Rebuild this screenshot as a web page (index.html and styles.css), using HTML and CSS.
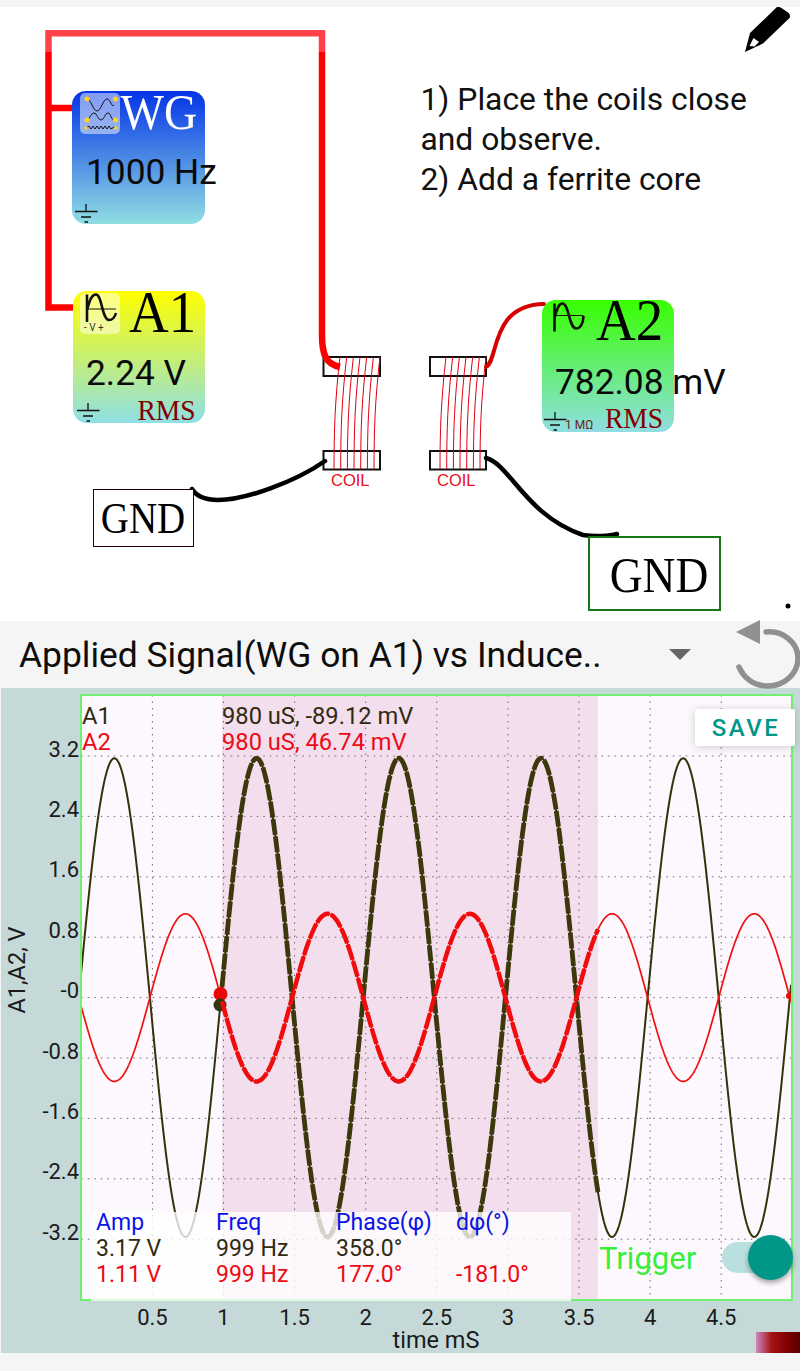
FILE: index.html
```html
<!DOCTYPE html>
<html lang="en">
<head>
<meta charset="utf-8">
<title>Induction experiment</title>
<link rel="stylesheet" href="styles.css">
<script src="chart.js" defer></script>
</head>
<body>
<div class="page">
  <div class="strip-top"></div>
  <section class="canvas">
    <svg class="wires" viewBox="0 7 800 614" width="800" height="614">
      <g class="bars">
        <rect x="323.5" y="357" width="56.500" height="19"/>
        <rect x="323.500" y="451" width="56.500" height="18.500"/>
        <rect x="430" y="357" width="56" height="19"/>
        <rect x="430" y="451" width="56" height="18.500"/>
      </g>
      <g fill="none" stroke-linejoin="miter">
        <path class="wire-red" d="M48.5 52V307.5H73M48.5 108H73M322 52V335C322 355 326 364 340 367"/>
        <path class="wire-pale" d="M48.5 52V33.3H322V52"/>
        <path class="wire-dark" d="M486 367C499 360 490 305 544 304"/>
        <path class="wire-black" d="M325 461C295 482 245 500 218 500C205 500 197 497 192 489"/>
        <path class="wire-black" d="M486 458C510 464 525 515 583 535C595 537 610 536 617 534"/>
      </g>
      <g class="turns">
        <path d="M340 357C335 400 334 430 334 469"/>
        <path d="M346.700 357C341.700 400 340.700 430 340.700 469"/>
        <path d="M353.400 357C348.400 400 347.400 430 347.400 469"/>
        <path d="M360 357C355 400 354 430 354 469"/>
        <path d="M366.700 357C361.700 400 360.700 430 360.700 469"/>
        <path d="M373.400 357C368.400 400 367.400 430 367.400 469"/>
        <path d="M380 357C375 400 374 430 374 469"/>
        <path d="M446 357C441 400 440 430 440 469"/>
        <path d="M452.700 357C447.700 400 446.700 430 446.700 469"/>
        <path d="M459.400 357C454.400 400 453.400 430 453.400 469"/>
        <path d="M466 357C461 400 460 430 460 469"/>
        <path d="M472.700 357C467.700 400 466.700 430 466.700 469"/>
        <path d="M479.400 357C474.400 400 473.400 430 473.400 469"/>
        <path d="M486 357C481 400 480 430 480 469"/>
      </g>
      <text class="coil-label" x="331" y="486">COIL</text>
      <text class="coil-label" x="437" y="486">COIL</text>
      <circle cx="788" cy="606" r="2.500"/>
    </svg>

    <svg class="pencil" viewBox="0 0 46 46" width="46" height="46">
      <path d="M31.700 1.300C33.500 0.500 35 1 36.500 2L43 6.500C45 8 45.500 10 44.500 12L18 37.500 0 46 5 27Z"/>
      <path class="pencil-tip" d="M8.500 32 14 36 9.500 40.500 4.500 40Z"/>
    </svg>

    <div class="module module-wg">
      <svg class="mod-icon mod-icon-plate" viewBox="0 0 40 41" width="40" height="41">
        <g class="ic-thin">
          <path d="M7 6C11 6 13 18 17 18S23 6 27 6 31 15 34 12"/>
          <path d="M7 27C9 27 11 20 14 20S18 27 21 27 25 20 28 20 31 27 34 27"/>
          <path d="M6 35 9 33 11 36 13 33 15 36 17 33 19 36 21 33 23 36 25 33 27 36 29 33 31 36 34 34"/>
        </g>
        <g class="ic-dot">
          <circle cx="7" cy="6" r="2.500"/><circle cx="35.500" cy="6" r="2.500"/>
          <circle cx="7" cy="27" r="2.500"/><circle cx="35.500" cy="27" r="2.500"/>
          <circle cx="6" cy="35" r="1.800"/><circle cx="36" cy="35" r="1.800"/>
        </g>
      </svg>
      <span class="mod-name mod-name-light">WG</span>
      <span class="mod-value">1000 Hz</span>
      <svg class="gnd" viewBox="0 0 23 20" width="23" height="20"><path d="M11 0V7M0 7.500H22.500M6 13H16M9.500 18H13"/></svg>
    </div>

    <div class="module module-a1">
      <svg class="mod-icon mod-icon-plate" viewBox="0 0 40 41" width="40" height="41">
        <path class="ic-thick" d="M7 1.500V29M7 17C10 6 12 1.500 16 1.500C22 1.500 22 27 29 27C32 27 35 24 36 20"/>
        <path class="ic-line" d="M7 16H36"/>
        <text class="ic-text" x="4" y="38">- V +</text>
      </svg>
      <span class="mod-name">A1</span>
      <span class="mod-value">2.24 V</span>
      <span class="mod-rms">RMS</span>
      <svg class="gnd" viewBox="0 0 23 20" width="23" height="20"><path d="M11 0V7M0 7.500H22.500M6 13H16M9.500 18H13"/></svg>
    </div>

    <div class="module module-a2">
      <svg class="mod-icon" viewBox="0 0 40 41" width="40" height="41">
        <path class="ic-thick" d="M4.500 1.500V29.500M4.500 16C7 6 9 1.500 12.500 1.500C19 1.500 19 26.500 26 26.500C30 26.500 33 22 33.500 14"/>
        <path class="ic-line" d="M4.500 13.500H33.500"/>
      </svg>
      <span class="mod-name">A2</span>
      <span class="mod-value">782.08 mV</span>
      <span class="mod-rms">RMS</span>
      <svg class="gnd" viewBox="0 0 23 20" width="23" height="20"><path d="M11 0V7M0 7.500H22.500M6 13H16M9.500 18H13"/></svg>
      <span class="mod-ohm">1 MΩ</span>
    </div>

    <div class="gnd-box gnd-box-a"><span class="gnd-word">GND</span></div>
    <div class="gnd-box gnd-box-b"><span class="gnd-word">GND</span></div>

    <p class="notes">1) Place the coils close<br>and observe.<br>2) Add a ferrite core</p>
  </section>

  <div class="picker">
    <span class="picker-text">Applied Signal(WG on A1) vs Induce..</span>
    <svg class="picker-caret" viewBox="0 0 22 11" width="22" height="11"><path d="M0 0H22L11 11Z"/></svg>
    <svg class="reset" viewBox="0 0 66 70" width="66" height="70">
      <path class="reset-head" d="M0 12 24 0V24Z"/>
      <path class="reset-arc" d="M30 12C47 10 62 23 62 38C62 54 48 66 32 66C18 66 8 58 3 47"/>
    </svg>
  </div>

  <section class="chart">
    <svg class="plot" viewBox="0 688 800 665" width="800" height="665">
      <rect class="plot-bg" x="81" y="695" width="710" height="605"/>
      <rect class="plot-band" x="222" y="695" width="376" height="605"/>
      <g id="grid" class="grid"></g>
      <path id="a1thin" class="a1-thin"/>
      <path id="a2thin" class="a2-thin"/>
      <circle class="mark-red" cx="220.500" cy="994" r="7"/>
      <circle class="mark-dark" cx="220" cy="1005" r="6.500"/>
      <path id="a1thick" class="a1-thick"/>
      <path id="a2thick" class="a2-thick"/>
      <circle class="mark-red" cx="789" cy="996" r="3"/>
      <rect class="plot-frame" x="81" y="695" width="711" height="605"/>
      <g id="yticks" class="tick tick-y"></g>
      <g id="xticks" class="tick tick-x"></g>
      <text class="axis-name" transform="translate(25 970) rotate(-90)">A1,A2, V</text>
    </svg>

    <span class="time-label">time mS</span>

    <div class="cursor">
      <div class="cursor-col">
        <span class="c-a1">A1</span>
        <span class="c-a2">A2</span>
      </div>
      <div class="cursor-col">
        <span class="c-a1">980 uS, -89.12 mV</span>
        <span class="c-a2">980 uS, 46.74 mV</span>
      </div>
    </div>

    <button class="save">SAVE</button>

    <div class="info">
      <span class="c-hd">Amp</span><span class="c-hd">Freq</span><span class="c-hd">Phase(φ)</span><span class="c-hd">dφ(°)</span>
      <span class="c-a1">3.17 V</span><span class="c-a1">999 Hz</span><span class="c-a1">358.0°</span><span></span>
      <span class="c-a2">1.11 V</span><span class="c-a2">999 Hz</span><span class="c-a2">177.0°</span><span class="c-a2">-181.0°</span>
    </div>

    <div class="trigger">
      <span class="trigger-label">Trigger</span>
      <span class="switch"><span class="switch-thumb"></span></span>
    </div>

    <div class="legend-bar"></div>
  </section>
  <div class="strip-bottom"></div>
</div>
</body>
</html>
```
FILE: styles.css
```css
* { box-sizing: border-box; }
html, body { margin: 0; padding: 0; background: #fff; }
body { font-family: Roboto, "Liberation Sans", sans-serif; color: #111; }
.page { width: 800px; height: 1371px; display: flex; flex-direction: column; overflow: hidden; }
.strip-top { height: 7px; background: #f5f5f5; }
.strip-bottom { height: 18px; background: #f5f5f5; }

.canvas { position: relative; height: 614px; background: #fff; }
.wires { position: absolute; left: 0; top: 0; }
.wire-red { stroke: #ff0000; stroke-width: 6.500; }
.wire-pale { stroke: #ff4248; stroke-width: 6.500; }
.wire-dark { stroke: #d60000; stroke-width: 4; stroke-linecap: round; }
.wire-black { stroke: #000; stroke-width: 4.500; stroke-linecap: round; }
.bars rect { fill: #fff; stroke: #111; stroke-width: 2; }
.turns path { fill: none; stroke: #e00010; stroke-width: 1; }
.coil-label { font-family: "Liberation Sans", sans-serif; font-size: 16.500px; fill: #e8101c; }

.pencil { position: absolute; left: 745px; top: -1px; }
.pencil path { fill: #000; }
.pencil .pencil-tip { fill: #fff; }

.module { position: absolute; width: 132px; height: 132px; border-radius: 14px; }
.module-wg { left: 72px; top: 84px; height: 133px; width: 133px; background: linear-gradient(#0433e6, #90dee3); }
.module-a1 { left: 72.500px; top: 284px; background: linear-gradient(#ffff00, #8fdfe6); }
.module-a2 { left: 542px; top: 293px; background: linear-gradient(#38ff00, #90dee2); }
.mod-icon { position: absolute; left: 7.500px; top: 1.500px; }
.mod-icon-plate { background: rgba(255,255,255,.5); border-radius: 5px; }
.ic-thin path { fill: none; stroke: #111; stroke-width: 1; }
.ic-dot circle { fill: #ffd21a; }
.ic-thick { fill: none; stroke: #111; stroke-width: 2.600; }
.ic-line { fill: none; stroke: #111; stroke-width: 1; }
.ic-text { font-size: 10px; fill: #333; }
.mod-name { position: absolute; font-family: "Liberation Serif", serif; font-size: 55px; line-height: 53px; color: #000; transform: scaleY(1.06); transform-origin: 0 42px; }
.module-wg .mod-name { font-size: 46px; left: 48.500px; top: -4px; transform: scaleY(1.09); }
.module-a1 .mod-name { left: 56.500px; top: -4px; }
.module-a2 .mod-name { left: 54px; top: -5px; }
.mod-name-light { color: #fff; }
.mod-value { position: absolute; font-size: 35.300px; line-height: 40px; white-space: nowrap; color: #0a0a0a; }
.module-wg .mod-value { left: 14px; top: 61px; }
.module-a1 .mod-value { left: 13.500px; top: 62px; }
.module-a2 .mod-value { left: 13px; top: 61.500px; }
.mod-rms { position: absolute; font-family: "Liberation Serif", serif; font-size: 27.500px; line-height: 30px; color: #800000; transform: scaleY(1.1); transform-origin: 0 23px; }
.module-a1 .mod-rms { left: 65px; top: 105px; }
.module-a2 .mod-rms { left: 63px; top: 104px; }
.gnd { position: absolute; left: 3px; bottom: 0; }
.gnd path { fill: none; stroke: #111; stroke-width: 1.300; }
.module-a1 .gnd { left: 4.500px; bottom: 0; }
.module-a2 .gnd { left: 2px; bottom: 0; }
.mod-ohm { position: absolute; left: 23px; bottom: 0; font-size: 12px; line-height: 14px; color: #6a2222; }

.gnd-box { position: absolute; display: flex; align-items: center; justify-content: center; font-family: "Liberation Serif", serif; background: #fff; color: #000; }
.gnd-word { display: block; transform: scaleY(1.12); }
.gnd-box-a { left: 92.500px; top: 482px; width: 101px; height: 58px; border: 1.500px solid #200; font-size: 39px; padding-bottom: 2px; }
.gnd-box-b { left: 588px; top: 529px; width: 133px; height: 75px; border: 2px solid #167716; font-size: 45.500px; padding: 2px 0 0 9px; }

.notes { position: absolute; left: 420.500px; top: 72px; margin: 0; font-size: 31.800px; line-height: 40px; color: #111; }

.picker { position: relative; height: 67px; background: #f5f5f5; display: flex; align-items: center; padding: 0 0 0 19px; }
.picker-text { font-size: 35.400px; line-height: 40px; color: #0d0d0d; white-space: nowrap; }
.picker-caret { position: absolute; left: 669px; top: 28px; }
.picker-caret path { fill: #666; }
.reset { position: absolute; left: 736px; top: -1px; z-index: 2; }
.reset-head { fill: #909090; }
.reset-arc { fill: none; stroke: #909090; stroke-width: 5.500; stroke-linecap: round; }

.chart { position: relative; height: 665px; background: #c5d9d8; box-shadow: inset 1px 0 0 #f5f5f5; }
.plot { display: block; }
.plot-bg { fill: #fdf8fd; }
.plot-band { fill: #f3deee; }
.plot-frame { fill: none; stroke: #70f070; stroke-width: 2; }
.grid line { stroke: #6a6a6a; stroke-width: 1; stroke-dasharray: 1.500 5; }
.a1-thin, .a2-thin, .a1-thick, .a2-thick { fill: none; }
.a1-thin { stroke: #33330a; stroke-width: 2; }
.a2-thin { stroke: #f01010; stroke-width: 1.700; }
.a1-thick { stroke: #3b390c; stroke-width: 4.800; stroke-dasharray: 16 1.500; }
.a2-thick { stroke: #f00c0c; stroke-width: 4.500; stroke-dasharray: 16 1.500; }
.mark-red { fill: #e80808; }
.mark-dark { fill: #2f3a12; }
.tick text { font-size: 22px; fill: #1a1a1a; }
.tick-y text { text-anchor: end; }
.tick-x text { text-anchor: middle; }
.axis-name { font-size: 23.500px; fill: #1a1a1a; text-anchor: middle; }
.time-label { position: absolute; left: 336px; bottom: 0; width: 200px; text-align: center; font-size: 23.500px; line-height: 25px; color: #1a1a1a; }

.cursor { position: absolute; left: 82px; top: 15px; display: flex; font-size: 23.700px; line-height: 26px; }
.cursor-col { display: flex; flex-direction: column; }
.cursor-col:first-child { width: 140px; }
.c-a1 { color: #2e2b10; }
.c-a2 { color: #ee0a14; }
.c-hd { color: #0a14e6; }

.save { position: absolute; left: 695px; top: 21px; width: 100px; height: 37px; padding: 0 0 0 2px; border: 0; border-radius: 2px; background: #fff; box-shadow: 0 1px 9px rgba(0,0,0,.18); color: #009688; font-family: Roboto, sans-serif; font-size: 24px; font-weight: 500; letter-spacing: 2.500px; }

.info { position: absolute; left: 91px; top: 524px; width: 480px; height: 89px; padding: 0 0 0 5px; background: rgba(255,255,255,.78); display: grid; grid-template-columns: repeat(4, 120px); grid-auto-rows: 26px; align-content: start; font-size: 23px; line-height: 22px; white-space: nowrap; }

.trigger { position: absolute; left: 599px; top: 544px; width: 194px; display: flex; align-items: center; justify-content: space-between; }
.trigger-label { font-size: 31px; line-height: 48px; padding-top: 3px; color: #36f03a; }
.switch { position: relative; display: block; width: 71px; height: 31px; border-radius: 16px; background: #b9dfdf; }
.switch-thumb { position: absolute; right: 0; top: -7px; width: 45px; height: 45px; border-radius: 50%; background: #009688; box-shadow: 0 3px 5px rgba(0,0,0,.35); }

.legend-bar { position: absolute; right: 0; bottom: 0; width: 44px; height: 21px; background: linear-gradient(90deg, #cc88c0, #a41414 35%, #800000 70%, #5a0000); }
```
FILE: chart.js
```js
(function () {
  var NS = 'http://www.w3.org/2000/svg';
  var pxPerMs = 142.2, x0 = 81.3, right = 791, top = 695, bottom = 1300;
  var zeroY = 997.6, pxPerV = 75.5, phase = 78.8;

  function add(parent, tag, attrs, text) {
    var el = document.createElementNS(NS, tag);
    for (var k in attrs) el.setAttribute(k, attrs[k]);
    if (text !== undefined) el.textContent = text;
    parent.appendChild(el);
  }
  function wave(from, to, amp, sign) {
    var d = '';
    for (var x = from; x <= to; x += 1) {
      var y = zeroY - sign * amp * pxPerV * Math.sin(2 * Math.PI * (x - phase) / pxPerMs);
      d += (d ? 'L' : 'M') + x.toFixed(1) + ' ' + y.toFixed(1);
    }
    return d;
  }

  var grid = document.getElementById('grid');
  var xt = document.getElementById('xticks');
  var yt = document.getElementById('yticks');
  for (var i = 1; i <= 9; i++) {
    var gx = x0 + i * pxPerMs / 2;
    add(grid, 'line', { x1: gx, x2: gx, y1: top, y2: bottom });
    add(xt, 'text', { x: gx, y: 1325 }, String(i / 2));
  }
  var labelYs = [-3.2, -2.4, -1.6, -0.8, 0, 0.8, 1.6, 2.4, 3.2];
  labelYs.forEach(function (v) {
    var gy = zeroY - v * pxPerV;
    add(grid, 'line', { x1: x0, x2: right, y1: gy, y2: gy });
    var text = v === 0 ? '-0' : v.toFixed(1);
    add(yt, 'text', { x: 79, y: gy + 0.5 }, text);
  });

  document.getElementById('a1thin').setAttribute('d', wave(81, 791, 3.17, 1));
  document.getElementById('a2thin').setAttribute('d', wave(81, 791, 1.11, -1));
  document.getElementById('a1thick').setAttribute('d', wave(222, 598, 3.17, 1));
  document.getElementById('a2thick').setAttribute('d', wave(222, 598, 1.11, -1));
})();
```
